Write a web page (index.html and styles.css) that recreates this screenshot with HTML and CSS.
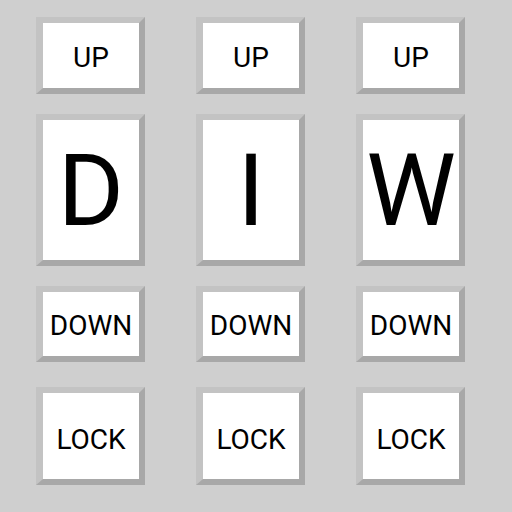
FILE: index.html
```html
<!DOCTYPE html>
<html>
<head>
<meta charset="utf-8">
<link rel="stylesheet" href="styles.css">
</head>
<body>
<div class="board">
  <div class="btn r-up"><span class="face">UP</span></div>
  <div class="btn r-up"><span class="face">UP</span></div>
  <div class="btn r-up"><span class="face">UP</span></div>
  <div class="btn r-big"><span class="face big">D</span></div>
  <div class="btn r-big"><span class="face big">I</span></div>
  <div class="btn r-big"><span class="face big">W</span></div>
  <div class="btn r-down"><span class="face">DOWN</span></div>
  <div class="btn r-down"><span class="face">DOWN</span></div>
  <div class="btn r-down"><span class="face">DOWN</span></div>
  <div class="btn r-lock"><span class="face lock">LOCK</span></div>
  <div class="btn r-lock"><span class="face lock">LOCK</span></div>
  <div class="btn r-lock"><span class="face lock">LOCK</span></div>
</div>
</body>
</html>
```
FILE: styles.css
```css
html, body {
  margin: 0;
  padding: 0;
  background: #cfcfcf;
  width: 512px;
  height: 512px;
  overflow: hidden;
}
.board {
  display: grid;
  grid-template-columns: 109px 109px 109px;
  grid-template-rows: 77px 152px 76px 103px;
  column-gap: 51px;
  row-gap: 20px;
  padding: 17px 0 0 36px;
}
.r-lock { margin-top: 5px; }
.btn {
  box-sizing: border-box;
  border-style: solid;
  border-width: 6px 6px 6px 7px;
  border-color: #c3c3c3 #a8a8a8 #a8a8a8 #c3c3c3;
  display: flex;
}
.face {
  flex: 1;
  background: #ffffff;
  display: flex;
  align-items: center;
  justify-content: center;
  font-family: Roboto, "Liberation Sans", sans-serif;
  font-size: 28px;
  color: #000000;
  padding-top: 3px;
}
.face.lock {
  padding-top: 7px;
}
.face.big {
  font-size: 101px;
  padding-top: 0;
}
```
